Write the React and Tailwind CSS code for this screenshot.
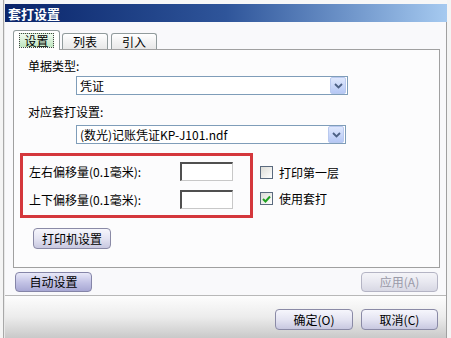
import React from 'react';

const font = { fontFamily: '"Noto Sans CJK SC", "Noto Sans", sans-serif' };

function Btn({ children, className = '', disabled = false, strong = false }) {
  return (
    <div
      className={`flex items-center justify-center rounded-[4px] border text-[12px] leading-none ${
        disabled
          ? 'border-[#b4b4c4] text-[#9a9aa8] bg-gradient-to-b from-[#f4f4f8] via-[#e8e8f0] to-[#d8d8e4]'
          : strong
          ? 'border-[#8585a8] text-black bg-gradient-to-b from-[#e8e8f8] via-[#c4c4e6] to-[#a8a8d4]'
          : 'border-[#8a8aa6] text-black bg-gradient-to-b from-[#f6f6fc] via-[#e4e4f2] to-[#c8c8e0]'
      } ${className}`}
    >
      {children}
    </div>
  );
}

function Combo({ text, className = '' }) {
  return (
    <div className={`flex items-center h-[19px] border border-[#7f9db9] bg-white ${className}`}>
      <span className="flex-1 pl-[3px] text-[12px] leading-[17px] text-black whitespace-nowrap">{text}</span>
      <div className="w-[16px] h-[17px] mr-px flex items-center justify-center rounded-[2px] border border-[#b9c9ef] bg-gradient-to-b from-[#dfe8fd] to-[#b6c8f5]">
        <svg width="9" height="6" viewBox="0 0 9 6">
          <path d="M1 1 L4.5 4.5 L8 1" fill="none" stroke="#4d6185" strokeWidth="1.8" />
        </svg>
      </div>
    </div>
  );
}

function Check({ checked, label, className = '' }) {
  return (
    <div className={`flex items-center gap-[6px] ${className}`}>
      <div className="w-[13px] h-[13px] border border-[#5a6a7e] bg-gradient-to-br from-[#dcdcd6] to-white flex items-center justify-center">
        {checked && (
          <svg width="9" height="8" viewBox="0 0 9 8">
            <path d="M1 4 L3.5 6.5 L8 1.5" fill="none" stroke="#21a121" strokeWidth="2" />
          </svg>
        )}
      </div>
      <span className="text-[12px] leading-none text-black">{label}</span>
    </div>
  );
}

function Field() {
  return (
    <div className="w-[53px] h-[19px] bg-white border-t-[2px] border-l-[2px] border-b border-r border-t-[#505050] border-l-[#505050] border-b-[#c8c8c8] border-r-[#c8c8c8]" />
  );
}

export default function App() {
  return (
    <div className="w-[451px] h-[338px] flex bg-[#f2f2f2] overflow-hidden" style={font}>
      {/* left edge of the window behind */}
      <div className="w-[5px] flex">
        <div className="w-[3px] bg-[#f4f4f4]" />
        <div className="w-px bg-[#a8a8a8]" />
        <div className="w-px bg-[#e8e8e8]" />
      </div>

      <div className="flex-1 flex flex-col">
        <div className="h-[4px] bg-[#f7f7f7]" />

        {/* Title bar */}
        <div className="h-[18px] flex items-center pl-[3px] bg-gradient-to-r from-[#0a246a] via-[#2f559a] to-[#a6caf0]">
          <span className="text-white font-bold text-[13px] leading-none">套打设置</span>
        </div>

        <div className="flex-1 flex flex-col bg-[#f9f9fb] border-r border-[#a0a0a0]">
          {/* Tabs */}
          <div className="flex items-end h-[28px] pl-[8px]">
            <div className="w-[47px] h-[20px] flex items-center justify-center rounded-t-[3px] border border-b-0 border-[#919b9c] bg-white relative z-10">
              <div className="px-[4px] h-[15px] flex items-center border border-dotted border-[#444] bg-gradient-to-b from-[#f0fbf0] to-[#bfe6c0] text-[12px] leading-none">
                设置
              </div>
            </div>
            <div className="w-[46px] h-[17px] ml-[2px] flex items-center justify-center rounded-t-[3px] border border-b-0 border-[#919b9c] bg-gradient-to-b from-white to-[#e6e6e6] text-[12px] leading-none">
              列表
            </div>
            <div className="w-[46px] h-[17px] ml-[3px] flex items-center justify-center rounded-t-[3px] border border-b-0 border-[#919b9c] bg-gradient-to-b from-white to-[#e6e6e6] text-[12px] leading-none">
              引入
            </div>
          </div>

          {/* Tab panel */}
          <div className="ml-[8px] mr-[6px] h-[219px] -mt-px border border-[#a0a0a0] bg-[#fcfcfd] flex flex-col">
            <div className="ml-[14px] mt-[9px] text-[12px] leading-[14px] text-black">单据类型:</div>
            <Combo text="凭证" className="ml-[62px] mt-[3px] w-[272px]" />
            <div className="ml-[14px] mt-[10px] text-[12px] leading-[14px] text-black">对应套打设置:</div>
            <Combo text="(数光)记账凭证KP-J101.ndf" className="ml-[62px] mt-[6px] w-[270px]" />

            <div className="flex items-start mt-[9px]">
              <div className="ml-[6px] w-[233px] h-[65px] border-[3px] border-[#d4373c] flex flex-col justify-center gap-[9px] pl-[6px]">
                <div className="flex items-center">
                  <span className="w-[151px] text-[12px] leading-none text-black">左右偏移量(0.1毫米):</span>
                  <Field />
                </div>
                <div className="flex items-center">
                  <span className="w-[151px] text-[12px] leading-none text-black">上下偏移量(0.1毫米):</span>
                  <Field />
                </div>
              </div>
              <div className="ml-[7px] mt-[13px] flex flex-col gap-[13px]">
                <Check label="打印第一层" />
                <Check checked label="使用套打" />
              </div>
            </div>

            <Btn className="ml-[19px] mt-[10px] w-[78px] h-[21px]">打印机设置</Btn>
          </div>

          {/* Auto / Apply row */}
          <div className="flex justify-between items-center h-[27px] pl-[10px] pr-[8px]">
            <Btn strong className="w-[77px] h-[20px]">自动设置</Btn>
            <Btn disabled className="w-[77px] h-[20px]">应用(A)</Btn>
          </div>

          {/* Footer */}
          <div className="flex-1 border-t border-[#b8b8b8] bg-gradient-to-b from-[#fdfdfd] via-[#ececec] to-[#c9c9c9] flex justify-end pt-[13px] pr-[8px] gap-[8px]">
            <Btn className="w-[78px] h-[21px]">确定(O)</Btn>
            <Btn className="w-[77px] h-[21px]">取消(C)</Btn>
          </div>
        </div>
      </div>

      <div className="w-[4px] bg-[#f4f4f4]" />
    </div>
  );
}
